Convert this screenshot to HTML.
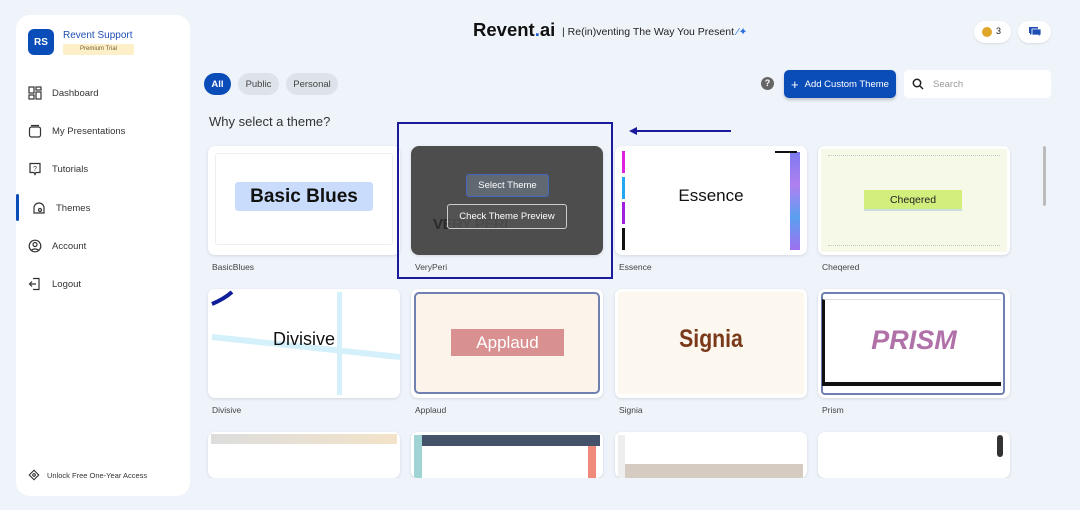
<!DOCTYPE html>
<html><head><meta charset="utf-8"><style>
*{box-sizing:border-box;margin:0;padding:0}
body{width:1080px;height:510px;overflow:hidden;background:#eff4fb;font-family:"Liberation Sans",sans-serif;position:relative;color:#222}
.abs{position:absolute}
.side{left:16px;top:15px;width:174px;height:481px;background:#fff;border-radius:14px}
.nav{position:absolute;left:12px;font-size:9.5px;color:#333;display:flex;align-items:center;gap:10px}
.nav svg{width:14px;height:14px}
.pill{position:absolute;top:73px;height:22px;border-radius:11px;background:#dde3ea;font-size:9.5px;color:#444;display:flex;align-items:center;justify-content:center}
.card{position:absolute;width:192px;height:109px;background:#fff;border-radius:7px;box-shadow:0 1px 3px rgba(0,0,0,.12);overflow:hidden}
.lbl{position:absolute;font-size:8.5px;color:#444}
</style></head><body>
<div class="abs side">
  <div class="abs" style="left:12px;top:14px;width:26px;height:26px;border-radius:6px;background:#0b4db8;color:#fff;font-size:10px;font-weight:bold;display:flex;align-items:center;justify-content:center">RS</div>
  <div class="abs" style="left:47px;top:15px;font-size:10px;color:#1f4fb5">Revent Support</div>
  <div class="abs" style="left:47px;top:29px;width:71px;height:11px;background:#fdefc7;border-radius:2px;font-size:6px;color:#7a6030;text-align:center;line-height:11px">Premium Trial</div>
  <div class="nav" style="top:71px"><svg viewBox="0 0 14 14" fill="none" stroke="#333" stroke-width="1.2"><rect x="1" y="1" width="5" height="6"/><rect x="8" y="1" width="5" height="3"/><rect x="1" y="9" width="5" height="4"/><rect x="8" y="6" width="5" height="7"/></svg>Dashboard</div>
  <div class="nav" style="top:109px"><svg viewBox="0 0 14 14" fill="none" stroke="#333" stroke-width="1.2"><rect x="1.5" y="3" width="11" height="10" rx="2"/><path d="M3 1.5h8"/></svg>My Presentations</div>
  <div class="nav" style="top:147px"><svg viewBox="0 0 14 14" fill="none" stroke="#333" stroke-width="1.2"><path d="M2 1.5h10v9H8l-1 2-1-2H2z"/><text x="7" y="9" font-size="7" text-anchor="middle" fill="#333" stroke="none">?</text></svg>Tutorials</div>
  <div class="abs" style="left:0;top:179px;width:3px;height:27px;background:#0b4db8;border-radius:2px"></div>
  <div class="nav" style="top:186px;left:16px"><svg viewBox="0 0 14 14" fill="none" stroke="#333" stroke-width="1.2"><path d="M2 7a5 5 0 0 1 10 0v5H2z"/><circle cx="8" cy="9" r="1.5"/></svg>Themes</div>
  <div class="nav" style="top:224px"><svg viewBox="0 0 14 14" fill="none" stroke="#333" stroke-width="1.2"><circle cx="7" cy="7" r="5.8"/><circle cx="7" cy="5.5" r="2"/><path d="M3.5 11.5c1-2 6-2 7 0"/></svg>Account</div>
  <div class="nav" style="top:262px"><svg viewBox="0 0 14 14" fill="none" stroke="#333" stroke-width="1.2"><path d="M5 1.5h6v11H5M8 7H1.5M4 4.5 1.5 7 4 9.5"/></svg>Logout</div>
  <div class="nav" style="top:454px;font-size:7.5px;gap:7px"><svg viewBox="0 0 14 14" fill="none" stroke="#333" stroke-width="1.3" style="width:12px;height:12px"><path d="M7 1.5 12.5 7 7 12.5 1.5 7z"/><circle cx="7" cy="7" r="1.5"/></svg>Unlock Free One-Year Access</div>
</div>

<div class="abs" style="left:473px;top:19px;font-size:18.5px;font-weight:bold;color:#111">Revent<span style="color:#1f5fd0">.</span>ai</div>
<div class="abs" style="left:562px;top:26px;font-size:10.5px;color:#222">| Re(in)venting The Way You Present <span style="color:#2a6fd8">⁄✦</span></div>
<div class="abs" style="left:974px;top:21px;width:37px;height:22px;border-radius:11px;background:#fff;box-shadow:0 1px 2px rgba(0,0,0,.1)"><div class="abs" style="left:8px;top:6px;width:10px;height:10px;border-radius:50%;background:#e0a62a"></div><div class="abs" style="left:22px;top:5px;font-size:9px">3</div></div>
<div class="abs" style="left:1018px;top:21px;width:33px;height:22px;border-radius:11px;background:#fff;box-shadow:0 1px 2px rgba(0,0,0,.1)"><svg class="abs" style="left:10px;top:5px" width="14" height="12" viewBox="0 0 14 12"><path d="M1 1h9v6H5l-3 2V7H1z" fill="#1f4fb5"/><path d="M4 3h9v6h-1v2l-2-2H4z" fill="#1f4fb5" stroke="#fff" stroke-width=".8"/></svg></div>

<div class="pill" style="left:204px;width:27px;background:#0b4db8;color:#fff;font-weight:bold">All</div>
<div class="pill" style="left:238px;width:41px">Public</div>
<div class="pill" style="left:286px;width:52px">Personal</div>
<div class="abs" style="left:209px;top:114px;font-size:13px;color:#333">Why select a theme?</div>

<div class="abs" style="left:761px;top:77px;width:13px;height:13px;border-radius:50%;background:#666;color:#fff;font-size:9px;font-weight:bold;text-align:center;line-height:13px">?</div>
<div class="abs" style="left:784px;top:70px;width:112px;height:28px;border-radius:5px;background:#0b4db8;color:#fff;font-size:9.5px;display:flex;align-items:center;justify-content:center;gap:6px;box-shadow:0 2px 3px rgba(0,0,0,.2)"><span style="font-size:13px">+</span>Add Custom Theme</div>
<div class="abs" style="left:904px;top:70px;width:147px;height:28px;border-radius:5px;background:#fff;font-size:9.5px;color:#999;display:flex;align-items:center;padding-left:8px;gap:9px"><svg width="12" height="12" viewBox="0 0 12 12" fill="none" stroke="#222" stroke-width="1.5"><circle cx="5" cy="5" r="3.7"/><path d="M8 8l3 3"/></svg>Search</div>

<!-- row 1 -->
<div class="card" style="left:208px;top:146px"><div class="abs" style="left:7px;top:7px;width:178px;height:92px;border:1px solid #eee;border-radius:3px"></div><div class="abs" style="left:27px;top:36px;width:138px;height:29px;background:#c9dcfb;border-radius:3px;font-size:19px;font-weight:bold;text-align:center;line-height:29px;color:#111">Basic Blues</div></div>
<div class="lbl" style="left:212px;top:262px">BasicBlues</div>

<div class="card" style="left:411px;top:146px;background:#4d4d4d;border-radius:8px"><div class="abs" style="left:22px;top:70px;font-size:15px;color:#2a2a2a;font-weight:bold;letter-spacing:-.5px">VERY PERI</div><div class="abs" style="left:55px;top:28px;width:83px;height:23px;background:#606872;border:1px solid #4466c0;border-radius:3px;color:#fff;font-size:9.5px;text-align:center;line-height:21px">Select Theme</div><div class="abs" style="left:36px;top:58px;width:120px;height:25px;background:rgba(85,85,85,.75);border:1px solid #ccc;border-radius:3px;color:#fff;font-size:9.5px;text-align:center;line-height:23px">Check Theme Preview</div></div>
<div class="lbl" style="left:415px;top:262px">VeryPeri</div>
<div class="abs" style="left:397px;top:122px;width:216px;height:157px;border:2px solid #1a1a9c"></div>
<div class="abs" style="left:636px;top:130px;width:95px;height:2px;background:#1a1a9c"></div>
<div class="abs" style="left:629px;top:127px;width:0;height:0;border-top:4px solid transparent;border-bottom:4px solid transparent;border-right:8px solid #1a1a9c"></div>

<div class="card" style="left:615px;top:146px"><div class="abs" style="left:7px;top:5px;width:3px;height:22px;background:#e020e0"></div><div class="abs" style="left:7px;top:31px;width:3px;height:22px;background:#20a8f0"></div><div class="abs" style="left:7px;top:56px;width:3px;height:22px;background:#a020e0"></div><div class="abs" style="left:7px;top:82px;width:3px;height:22px;background:#111"></div><div class="abs" style="left:175px;top:6px;width:10px;height:98px;background:linear-gradient(#7a7af0,#b080f0,#5aa0f0,#a070f0)"></div><div class="abs" style="left:160px;top:5px;width:22px;height:2px;background:#111"></div><div class="abs" style="left:0;top:40px;width:192px;text-align:center;font-size:17px;color:#111">Essence</div></div>
<div class="lbl" style="left:619px;top:262px">Essence</div>

<div class="card" style="left:818px;top:146px"><div class="abs" style="left:3px;top:3px;width:186px;height:103px;background:#f6f9e8"></div><div class="abs" style="left:10px;top:9px;width:172px;border-top:1px dotted #bcc"></div><div class="abs" style="left:10px;top:99px;width:172px;border-top:1px dotted #bcc"></div><div class="abs" style="left:46px;top:44px;width:98px;height:21px;background:#d2ee7c;border-bottom:2px solid #cdd;font-size:10.5px;text-align:center;line-height:20px;color:#222">Cheqered</div></div>
<div class="lbl" style="left:822px;top:262px">Cheqered</div>

<!-- row 2 -->
<div class="card" style="left:208px;top:289px"><svg class="abs" style="left:0;top:0" width="192" height="109"><path d="M4 15Q16 10 24 3" stroke="#0f1f9a" stroke-width="4" fill="none"/><rect x="129" y="3" width="5" height="103" fill="#d4f0fb"/><path d="M4 48L192 68" stroke="#d4f0fb" stroke-width="6"/></svg><div class="abs" style="left:0;top:40px;width:192px;text-align:center;font-size:18px;color:#111">Divisive</div></div>
<div class="lbl" style="left:212px;top:405px">Divisive</div>

<div class="card" style="left:411px;top:289px"><div class="abs" style="left:3px;top:3px;width:186px;height:102px;background:#fcf4ea;border:2px solid #7080b0;border-radius:5px"></div><div class="abs" style="left:40px;top:40px;width:113px;height:27px;background:#d99090;color:#fff;font-size:17px;text-align:center;line-height:27px">Applaud</div></div>
<div class="lbl" style="left:415px;top:405px">Applaud</div>

<div class="card" style="left:615px;top:289px"><div class="abs" style="left:3px;top:3px;width:186px;height:102px;background:#fcf8ef"></div><div class="abs" style="left:0;top:36px;width:192px;text-align:center;font-size:25px;font-weight:bold;color:#7a3a1a;transform:scaleX(.85)">Signia</div></div>
<div class="lbl" style="left:619px;top:405px">Signia</div>

<div class="card" style="left:818px;top:289px"><div class="abs" style="left:3px;top:3px;width:184px;height:103px;border:2px solid #7080b0;border-radius:4px"></div><div class="abs" style="left:4px;top:10px;width:179px;height:87px;border-left:3px solid #111;border-bottom:4px solid #111;border-top:1px solid #ddd"></div><div class="abs" style="left:0;top:36px;width:192px;text-align:center;font-size:27px;font-style:italic;font-weight:bold;color:#b070a8">PRISM</div></div>
<div class="lbl" style="left:822px;top:405px">Prism</div>

<!-- row 3 -->
<div class="card" style="left:208px;top:432px;height:46px"><div class="abs" style="left:3px;top:2px;width:186px;height:10px;background:linear-gradient(90deg,#ddd,#f3e3c8)"></div></div>
<div class="card" style="left:411px;top:432px;height:46px"><div class="abs" style="left:3px;top:3px;width:186px;height:11px;background:#44526a"></div><div class="abs" style="left:3px;top:3px;width:8px;height:43px;background:#a0d4d4"></div><div class="abs" style="left:177px;top:14px;width:8px;height:32px;background:#f08a7a"></div></div>
<div class="card" style="left:615px;top:432px;height:46px"><div class="abs" style="left:10px;top:32px;width:178px;height:14px;background:#d6cbc0"></div><div class="abs" style="left:3px;top:3px;width:7px;height:43px;background:#eee"></div></div>
<div class="card" style="left:818px;top:432px;height:46px"><div class="abs" style="left:179px;top:3px;width:6px;height:22px;background:#333;border-radius:3px"></div></div>
<div class="abs" style="left:200px;top:478px;width:850px;height:32px;background:#eff4fb"></div>

<div class="abs" style="left:1043px;top:146px;width:3px;height:60px;background:#bbb;border-radius:2px"></div>
</body></html>
